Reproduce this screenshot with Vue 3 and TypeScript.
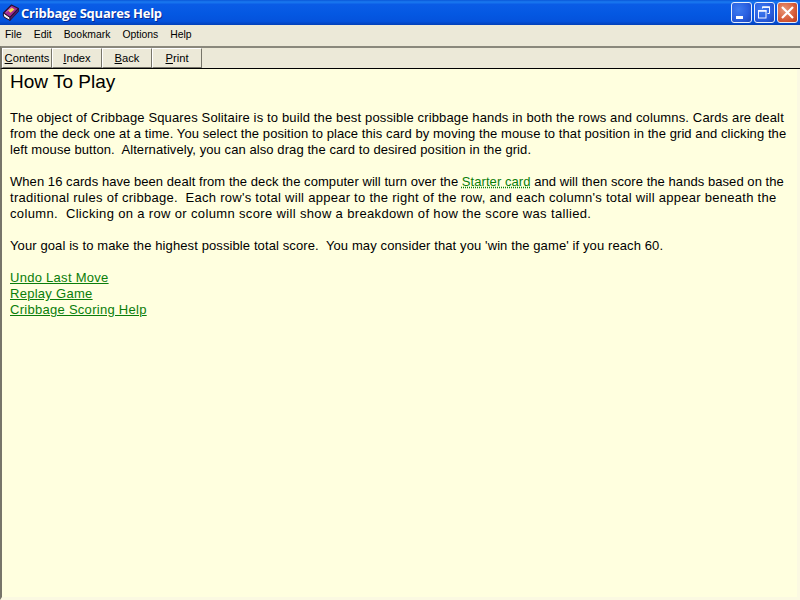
<script setup lang="ts">
const menus = ['File', 'Edit', 'Bookmark', 'Options', 'Help']
const tools = [
  { key: 'C', after: 'ontents' },
  { key: 'I', after: 'ndex' },
  { key: 'B', after: 'ack' },
  { key: 'P', after: 'rint' },
]
const links = ['Undo Last Move', 'Replay Game', 'Cribbage Scoring Help']
</script>

<template>
  <div class="win">
    <header class="title">
      <svg class="appicon" width="18" height="18" viewBox="0 0 18 18">
        <path d="M1.5 9 L9.5 1 L16.5 4.5 L8 13.5 Z" fill="#a02c94" stroke="#241030" stroke-width="1.1" stroke-linejoin="round"/>
        <path d="M1.5 9 L8 13.5 L8 16.5 L2 13 Q.8 11 1.5 9 Z" fill="#f8f4ee" stroke="#241030" stroke-width="1"/>
        <path d="M8 13.5 L16.5 4.5 L16.5 7.5 L8 16.5 Z" fill="#4e1a60" stroke="#241030" stroke-width="0.8"/>
        <path d="M6 6.5 L10 3.8 L12.5 5.4 L8.5 8.8 Z" fill="#f2d648"/>
        <path d="M4 8.5 L9.5 3" stroke="#dc88d4" stroke-width="0.8"/>
      </svg>
      <span class="title-text">Cribbage Squares Help</span>
      <div class="caps">
        <div class="cap blue">
          <svg width="21" height="21" viewBox="0 0 21 21"><rect x="5" y="14" width="7" height="3" fill="#fff"/></svg>
        </div>
        <div class="cap blue">
          <svg width="21" height="21" viewBox="0 0 21 21" fill="none" stroke="#f2f6ff">
            <path d="M8.5 6.5V5H15.5V11.5H13.5" stroke-width="1"/><path d="M8 5.2H16" stroke-width="1.6"/>
            <rect x="4.5" y="8.5" width="7.5" height="7.5" stroke-width="1"/><path d="M4 9H12.5" stroke-width="1.6"/>
          </svg>
        </div>
        <div class="cap red">
          <svg width="21" height="21" viewBox="0 0 21 21"><path d="M5 5L16 16M16 5L5 16" stroke="#fff" stroke-width="2.2"/></svg>
        </div>
      </div>
    </header>
    <nav class="menu">
      <span v-for="m in menus" :key="m" class="menu-item">{{ m }}</span>
    </nav>
    <div class="toolbar">
      <button v-for="t in tools" :key="t.key" class="tool" type="button"><u>{{ t.key }}</u>{{ t.after }}</button>
    </div>
    <main class="content">
      <h1>How To Play</h1>
      <p>
        <span class="l a">The object of Cribbage Squares Solitaire is to build the best possible cribbage hands in both the rows and columns. Cards are dealt</span>
        <span class="l b">from the deck one at a time. You select the position to place this card by moving the mouse to that position in the grid and clicking the</span>
        <span class="l b">left mouse button.&nbsp; Alternatively, you can also drag the card to desired position in the grid.</span>
      </p>
      <p>
        <span class="l c">When 16 cards have been dealt from the deck the computer will turn over the <a class="dotted">Starter card</a> and will then score the hands based on the</span>
        <span class="l d">traditional rules of cribbage.&nbsp; Each row's total will appear to the right of the row, and each column's total will appear beneath the</span>
        <span class="l e">column.&nbsp; Clicking on a row or column score will show a breakdown of how the score was tallied.</span>
      </p>
      <p><span class="l f">Your goal is to make the highest possible total score.&nbsp; You may consider that you 'win the game' if you reach 60.</span></p>
      <div class="links">
        <a v-for="l in links" :key="l">{{ l }}</a>
      </div>
    </main>
  </div>
</template>

<style>
html, body { margin: 0; overflow: hidden; }
</style>

<style scoped>
.win {
  width: 800px; height: 600px; display: flex; flex-direction: column;
  font-family: "Liberation Sans", Arial, sans-serif; background: #ece9d8; overflow: hidden;
}
.title {
  height: 25px; flex: none; display: flex; align-items: center; padding: 0 2px;
  background: linear-gradient(180deg, #0a57d8 0%, #1a7af0 8%, #0a5ce6 18%, #0458e2 55%, #0452dc 85%, #0340b8 100%);
}
.appicon { flex: none; margin-right: 1px; }
.title-text {
  color: #fff; font-family: "Open Sans", sans-serif; font-weight: 700; font-size: 13px; letter-spacing: -0.24px;
  text-shadow: 1px 1px 0 #0a2a90; flex: 1;
}
.caps { display: flex; gap: 2px; }
.cap {
  width: 21px; height: 21px; box-sizing: border-box; border: 1px solid #e6eefc; border-radius: 3px;
  display: flex;
}
.cap svg { margin: -1px; flex: none; }
.blue { background: radial-gradient(circle at 35% 35%, #3f7cf0 0%, #2a5fe0 55%, #1a44b8 100%); }
.red { background: radial-gradient(circle at 35% 35%, #e89878 0%, #d8603c 55%, #b83a1c 100%); }
.menu {
  height: 21px; flex: none; display: flex; align-items: center; font-size: 10.4px; color: #000;
  padding: 0 0 2px 5px; box-sizing: border-box; gap: 12px;
}
.toolbar {
  height: 23px; flex: none; display: flex; box-sizing: border-box;
  border-top: 2px solid #8a887c; border-bottom: 1px solid #000; border-left: 2px solid #77756a;
  background: #ece9d8;
}
.tool {
  width: 50px; height: 20px; margin: 0; padding: 0 0 1px; box-sizing: border-box; flex: none;
  font: 11.2px "Liberation Sans", Arial, sans-serif; color: #000; background: #ece9d8;
  border: 1px solid; border-color: #fff #77756a #77756a #fff;
}
.content {
  flex: 1; box-sizing: border-box; background: #ffffdf; color: #000;
  border-left: 2px solid #77756a; border-right: 3px solid #fbf9e2; border-bottom: 3px solid #fbf9e2;
  padding: 2px 0 0 8px; font-size: 13px; line-height: 16px;
}
h1 { margin: 0 0 17px; font-weight: 400; font-size: 19px; line-height: 22px; }
p { margin: 0 0 16px; white-space: nowrap; }
.l { display: block; }
.a { letter-spacing: 0.143px; }
.b { letter-spacing: 0.08px; }
.c { letter-spacing: 0.06px; }
.d { letter-spacing: 0.27px; }
.e { letter-spacing: 0.35px; }
.f { letter-spacing: 0.106px; }
a { color: #0a7d0a; text-decoration: underline; }
.dotted { text-decoration-style: dotted; }
.links { display: flex; flex-direction: column; align-items: flex-start; letter-spacing: 0.28px; }
</style>
